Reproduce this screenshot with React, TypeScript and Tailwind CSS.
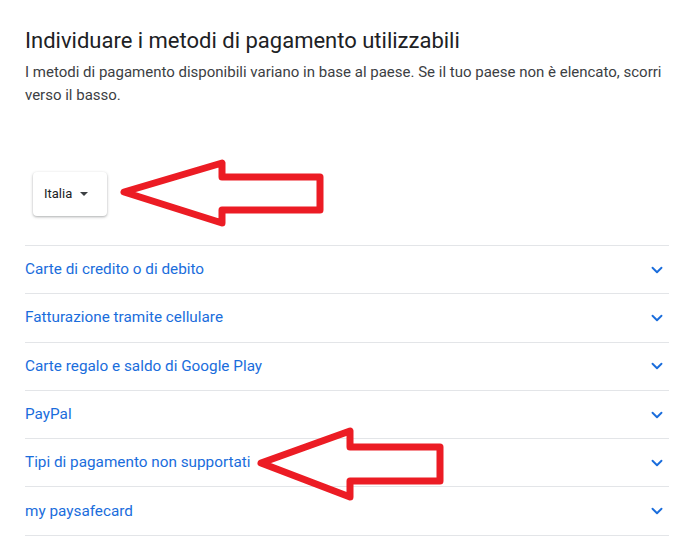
import { ChevronDown } from "lucide-react";

const rows = [
  "Carte di credito o di debito",
  "Fatturazione tramite cellulare",
  "Carte regalo e saldo di Google Play",
  "PayPal",
  "Tipi di pagamento non supportati",
  "my paysafecard",
];

function Arrow({ points }: { points: string }) {
  return (
    <polygon
      points={points}
      fill="none"
      stroke="#ec1c24"
      strokeWidth={7}
      strokeLinejoin="round"
    />
  );
}

export default function App() {
  return (
    <div className="relative w-[700px] h-[544px] overflow-hidden bg-white font-['Roboto','Liberation_Sans',sans-serif]">
      <div className="pl-[25px] pr-[31px] pt-[27px]">
        <h1 className="text-[22px] leading-[28px] text-[#202124]">
          Individuare i metodi di pagamento utilizzabili
        </h1>
        <p className="mt-[6px] mr-[-10px] text-[15px] leading-[23px] text-[#3c4043]">
          I metodi di pagamento disponibili variano in base al paese. Se il tuo paese non è elencato, scorri verso il basso.
        </p>

        <div className="mt-[65px] ml-[8px] flex h-[44px] w-[74px] items-center gap-[8px] rounded-[4px] bg-white pl-[11px] text-[13px] text-[#202124] shadow-[0_1px_3px_rgba(60,64,67,0.3),0_1px_2px_rgba(60,64,67,0.15)]">
          <span>Italia</span>
          <span className="h-0 w-0 border-x-[4px] border-t-[4px] border-x-transparent border-t-[#3c4043]" />
        </div>

        <div className="mt-[29px] border-b border-[#e3e5e8]">
          {rows.map((r) => (
            <div
              key={r}
              className="flex h-[48.3px] items-center justify-between border-t border-[#e3e5e8] text-[15.3px] text-[#1a6ddc]"
            >
              <span>{r}</span>
              <ChevronDown size={18} strokeWidth={2.5} className="mr-[3px] text-[#1a6ddc]" />
            </div>
          ))}
        </div>
      </div>

      <svg className="absolute left-0 top-0" width="700" height="544">
        <Arrow points="124,192 222,163 222,177 320,177 320,210 222,210 222,223" />
        <Arrow points="261,463 350,431 350,447 440,447 440,481 350,481 350,497" />
      </svg>
    </div>
  );
}
